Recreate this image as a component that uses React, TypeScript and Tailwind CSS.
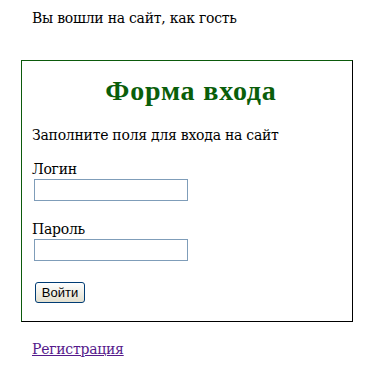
export default function App() {
  return (
    <div className="min-h-[367px] bg-white pt-[9px] font-['DejaVu_Serif',serif] text-[14px] leading-[18px] tracking-[-0.25px] text-black">
      <p className="ml-[32px] h-[18px]">Вы вошли на сайт, как гость</p>

      <div className="ml-[21px] mt-[33px] h-[262px] w-[332px] border border-t-[#0b5a0b] border-l-[#0b5a0b] border-r-black border-b-black">
        <h2 className="mt-[15px] pl-[8px] text-center font-['Liberation_Serif',serif] text-[28px] font-bold leading-[30px] tracking-[0.8px] text-[#0a5e0a]">
          Форма входа
        </h2>
        <div className="pl-[10px]">
          <p className="mt-[20px]">Заполните поля для входа на сайт</p>
          <p className="mt-[16px]">Логин</p>
          <input
            type="text"
            className="ml-[2px] mt-px block h-[22px] w-[154px] border border-[#7f9db9] bg-white px-1 text-[13px] outline-none"
          />
          <p className="mt-[19px]">Пароль</p>
          <input
            type="password"
            className="ml-[2px] mt-px block h-[22px] w-[154px] border border-[#7f9db9] bg-white px-1 text-[13px] outline-none"
          />
          <button className="ml-[3px] mt-[21px] block h-[21px] w-[50px] rounded-[3px] border border-[#003c74] bg-gradient-to-b from-white to-[#e3e0d0] font-['Liberation_Sans',sans-serif] text-[13px] leading-[19px] tracking-normal text-black">
            Войти
          </button>
        </div>
      </div>

      <a href="#" className="ml-[32px] mt-[18px] inline-block text-[#551a8b] underline">
        Регистрация
      </a>
    </div>
  );
}
